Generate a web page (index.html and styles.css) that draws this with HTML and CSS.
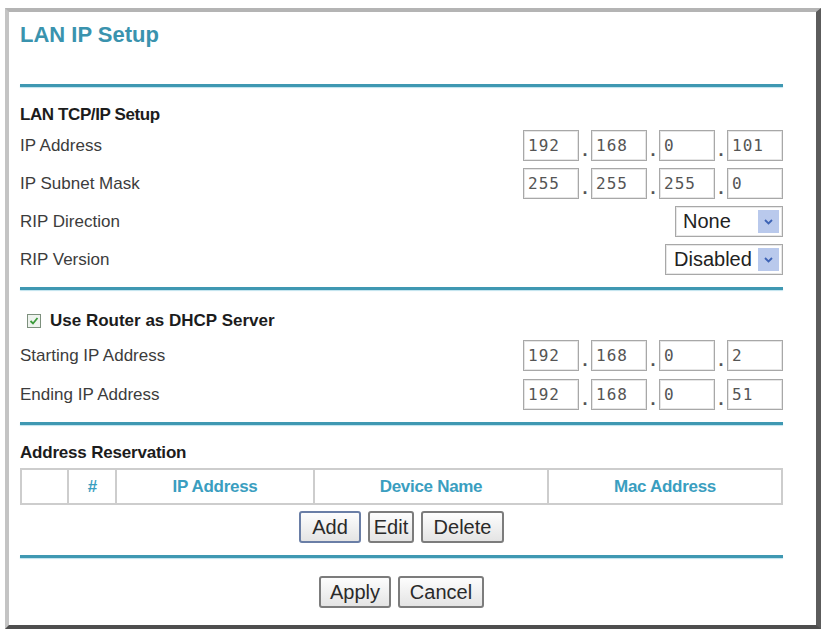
FILE: index.html
```html
<!DOCTYPE html>

<html lang="en">
	<head>
		<meta charset="utf-8">
		<meta name="viewport" content="width=device-width, initial-scale=1">
		<title>LAN IP Setup</title>
		<link rel="stylesheet" href="styles.css">
	</head>

	<body>
		<div class='frame'>
			<h1 class='title'>LAN IP Setup</h1>
			<div class='rule first'></div>

			<h2 class='head tcp'>LAN TCP/IP Setup</h2>
			<div class='rows'>
				<div class='row'>
					<span class='label'>IP Address</span>
					<div class='ip'>
						<input value='192'><span class='dot'>.</span><input value='168'><span class='dot'>.</span><input value='0'><span class='dot'>.</span><input value='101'>
					</div>
				</div>
				<div class='row'>
					<span class='label'>IP Subnet Mask</span>
					<div class='ip'>
						<input value='255'><span class='dot'>.</span><input value='255'><span class='dot'>.</span><input value='255'><span class='dot'>.</span><input value='0'>
					</div>
				</div>
				<div class='row'>
					<span class='label'>RIP Direction</span>
					<div class='select none'>
						<span>None</span>
						<span class='arrow'><svg width='9' height='6' viewBox='0 0 9 6'><path d='M1 1 L4.5 4.5 L8 1' fill='none' stroke='#3d63b5' stroke-width='1.8'/></svg></span>
					</div>
				</div>
				<div class='row'>
					<span class='label'>RIP Version</span>
					<div class='select disabled'>
						<span>Disabled</span>
						<span class='arrow'><svg width='9' height='6' viewBox='0 0 9 6'><path d='M1 1 L4.5 4.5 L8 1' fill='none' stroke='#3d63b5' stroke-width='1.8'/></svg></span>
					</div>
				</div>
			</div>
			<div class='rule mid'></div>

			<div class='check'>
				<svg class='box' width='14' height='14' viewBox='0 0 14 14'>
					<rect x='0.5' y='0.5' width='13' height='13' fill='#eef3ee' stroke='#7d907d'/>
					<path d='M3.5 7 L6 9.5 L10.5 4' fill='none' stroke='#3a9a3a' stroke-width='1.8'/>
				</svg>
				<span class='head'>Use Router as DHCP Server</span>
			</div>
			<div class='rows dhcp'>
				<div class='row'>
					<span class='label'>Starting IP Address</span>
					<div class='ip'>
						<input value='192'><span class='dot'>.</span><input value='168'><span class='dot'>.</span><input value='0'><span class='dot'>.</span><input value='2'>
					</div>
				</div>
				<div class='row'>
					<span class='label'>Ending IP Address</span>
					<div class='ip'>
						<input value='192'><span class='dot'>.</span><input value='168'><span class='dot'>.</span><input value='0'><span class='dot'>.</span><input value='51'>
					</div>
				</div>
			</div>
			<div class='rule mid'></div>

			<h2 class='head res'>Address Reservation</h2>
			<table class='list'>
				<tr>
					<th class='c1'></th>
					<th class='c2'><i>#</i></th>
					<th class='c3'>IP Address</th>
					<th class='c4'>Device Name</th>
					<th>Mac Address</th>
				</tr>
			</table>
			<div class='buttons'>
				<button class='btn def' style='width:62px'>Add</button>
				<button class='btn' style='width:46px'>Edit</button>
				<button class='btn' style='width:83px'>Delete</button>
			</div>
			<div class='rule low'></div>
			<div class='buttons last'>
				<button class='btn' style='width:72px'>Apply</button>
				<button class='btn' style='width:86px'>Cancel</button>
			</div>
		</div>
	</body>
</html>
```

FILE: styles.css
```css
html {
	background-color: #fff;
}

body {
	margin: 0;
	font-family: "Liberation Sans", Arial, sans-serif;
}

.frame {
	margin: 8px 5px 2px 5px;
	padding: 0 33px 17px 11px;
	border-top: 4px solid #b4b4b4;
	border-left: 4px solid #c4c4c4;
	border-right: 5px solid #5c5c5c;
	border-bottom: 4px solid #4e4e4e;
	background-color: #fff;
}

.title {
	margin: 10px 0 0 0;
	font-size: 22px;
	line-height: 26px;
	font-weight: bold;
	color: #3a93ae;
}

.rule {
	height: 3px;
	background-color: #3f98b2;
	box-shadow: 0 1px 1px #bfe3ee;
}

.rule.first {
	margin-top: 36px;
}

.rule.mid {
	margin-top: 12px;
}

.rule.low {
	margin-top: 12px;
}

.head {
	font-size: 17px;
	line-height: 20px;
	font-weight: bold;
	color: #1c1c1c;
	margin: 0;
}

.tcp {
	margin-top: 18px;
	letter-spacing: -0.4px;
}

.res {
	margin-top: 18px;
	letter-spacing: -0.2px;
}

.rows {
	display: flex;
	flex-direction: column;
	gap: 7px;
	margin-top: 5px;
}

.rows.dhcp {
	margin-top: 9px;
	gap: 8px;
}

.row {
	display: flex;
	justify-content: space-between;
	align-items: center;
	height: 31px;
}

.label {
	font-size: 17px;
	color: #3c3c3c;
}

.ip {
	display: flex;
	align-items: flex-end;
}

.ip input {
	box-sizing: border-box;
	width: 56px;
	height: 31px;
	margin: 0;
	padding: 0 4px;
	border: 1px solid #a8a8a8;
	box-shadow: inset 0 0 0 1px #e6e6e6;
	font-family: "DejaVu Sans Mono", monospace;
	font-size: 16px;
	letter-spacing: 1px;
	color: #555;
	background-color: #fff;
}

.dot {
	width: 12px;
	text-align: center;
	font-size: 18px;
	line-height: 22px;
	font-weight: bold;
	color: #555;
}

.select {
	box-sizing: border-box;
	display: flex;
	align-items: center;
	justify-content: space-between;
	height: 31px;
	padding: 3px 3px 3px 8px;
	border: 1px solid #a8a8a8;
	box-shadow: inset 0 0 0 1px #e8e8e8;
	font-size: 20px;
	color: #222;
}

.select.none {
	width: 108px;
	padding-left: 7px;
}

.select.disabled {
	width: 118px;
}

.arrow {
	display: flex;
	align-items: center;
	justify-content: center;
	width: 21px;
	height: 23px;
	background-color: #b9c9ec;
}

.check {
	display: flex;
	align-items: center;
	margin-top: 21px;
	padding-left: 7px;
}

.check .box {
	margin-right: 9px;
}

.list {
	width: 763px;
	table-layout: fixed;
	margin-top: 5px;
	border-collapse: collapse;
	border: 2px solid #cdcdcd;
}

.list th {
	height: 33px;
	padding: 0;
	border: 2px solid #cdcdcd;
	font-size: 17px;
	color: #3a9ec0;
	letter-spacing: -0.3px;
}

.c1 { width: 45px; }
.c2 { width: 46px; }
.c3 { width: 196px; }
.c4 { width: 232px; }

.buttons {
	display: flex;
	justify-content: center;
	gap: 7px;
	margin-top: 6px;
}

.buttons.last {
	margin-top: 18px;
}

.btn {
	box-sizing: border-box;
	height: 32px;
	padding: 0;
	border: 2px solid #7c7c7c;
	border-radius: 3px;
	background: linear-gradient(#fdfdfd, #e4e4e4);
	font-family: "Liberation Sans", Arial, sans-serif;
	font-size: 20px;
	color: #2a2a2a;
}

.btn.def {
	border-color: #6a7ea6;
}
```
